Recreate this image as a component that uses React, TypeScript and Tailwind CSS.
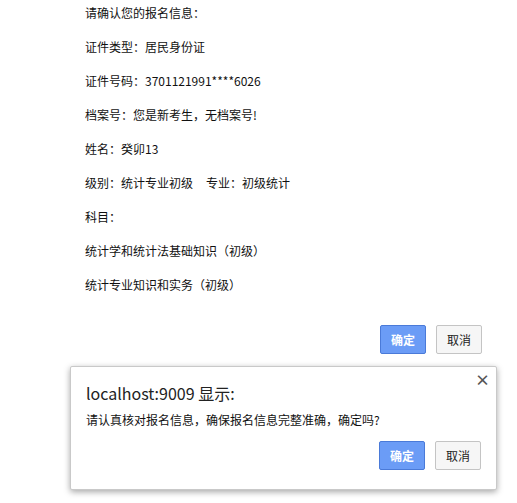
import React from 'react';

const font = { fontFamily: '"Noto Sans CJK SC", "Liberation Sans", sans-serif' };

const rows: React.ReactNode[] = [
  '请确认您的报名信息：',
  '证件类型：居民身份证',
  '证件号码：3701121991****6026',
  '档案号：您是新考生，无档案号!',
  '姓名：癸卯13',
  <>
    级别：统计专业初级<span className="ml-[13px]">专业：初级统计</span>
  </>,
  '科目：',
  '统计学和统计法基础知识（初级）',
  '统计专业知识和实务（初级）',
];

function Btn({ primary, children }: { primary?: boolean; children: React.ReactNode }) {
  return (
    <button
      className={
        primary
          ? 'flex h-[29px] w-[46px] items-center justify-center rounded-[2px] border border-[#4a7ad8] bg-[#6b9cf6] text-[12px] font-bold text-white'
          : 'flex h-[29px] w-[46px] items-center justify-center rounded-[2px] border border-[#c4c4c4] bg-[#f6f6f6] text-[12px] text-[#222]'
      }
    >
      {children}
    </button>
  );
}

export default function App() {
  return (
    <div className="relative h-[503px] w-[517px] overflow-hidden bg-white text-[12px] text-[#111]" style={font}>
      {/* page content */}
      <div className="flex flex-col gap-[14px] pl-[85px] pt-[3px] leading-[20px]">
        {rows.map((r, i) => (
          <div key={i}>{r}</div>
        ))}
      </div>
      <div className="mt-[30px] flex justify-end gap-[10px] pr-[35px]">
        <Btn primary>确定</Btn>
        <Btn>取消</Btn>
      </div>

      {/* browser confirm dialog */}
      <div className="absolute left-[70px] top-[366px] flex h-[124px] w-[427px] flex-col rounded-[2px] border border-[#c9c9c9] bg-white pl-[15px] pr-[15px] shadow-[0_2px_6px_rgba(0,0,0,0.35)]">
        <span className="absolute right-[6px] top-[5px] text-[15px] font-bold leading-[16px] text-[#555]">×</span>
        <div className="mt-[15px] text-[16px] leading-[22px] text-[#222]">localhost:9009 显示:</div>
        <div className="mt-[7px] leading-[18px] text-[#111]">请认真核对报名信息，确保报名信息完整准确，确定吗?</div>
        <div className="mt-[12px] flex justify-end gap-[10px]">
          <Btn primary>确定</Btn>
          <Btn>取消</Btn>
        </div>
      </div>
    </div>
  );
}
